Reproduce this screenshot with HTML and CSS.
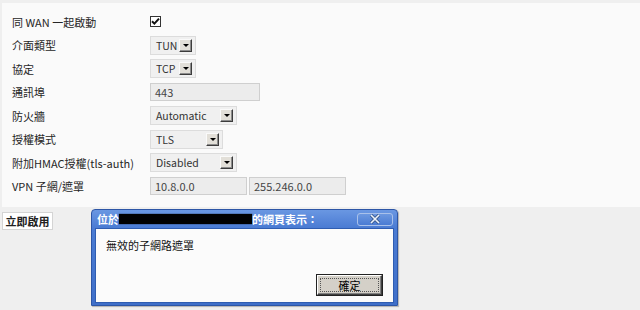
FILE: index.html
```html
<!DOCTYPE html>
<html lang="zh-Hant">
<head>
    <meta charset="UTF-8">
    <title>OpenVPN 伺服器</title>
    <link rel="stylesheet" href="styles.css">
</head>
<body>
    <div class="panel">
        <div class="form">
            <div class="row">
                <span class="label">同 WAN 一起啟動</span>
                <span class="check">
                    <svg width="9" height="9" viewBox="0 0 9 9"><path d="M1 4.2 L3.4 6.6 L8 1.6" fill="none" stroke="#111" stroke-width="2"/></svg>
                </span>
            </div>
            <div class="row">
                <span class="label">介面類型</span>
                <span class="select w46">TUN<span class="arrow"></span></span>
            </div>
            <div class="row">
                <span class="label">協定</span>
                <span class="select w46">TCP<span class="arrow"></span></span>
            </div>
            <div class="row">
                <span class="label">通訊埠</span>
                <span class="input w110">443</span>
            </div>
            <div class="row">
                <span class="label">防火牆</span>
                <span class="select w87">Automatic<span class="arrow"></span></span>
            </div>
            <div class="row">
                <span class="label">授權模式</span>
                <span class="select w73">TLS<span class="arrow"></span></span>
            </div>
            <div class="row">
                <span class="label">附加HMAC授權(tls-auth)</span>
                <span class="select w87">Disabled<span class="arrow"></span></span>
            </div>
            <div class="row">
                <span class="label">VPN 子網/遮罩</span>
                <span class="pair">
                    <span class="input w97">10.8.0.0</span>
                    <span class="input w97">255.246.0.0</span>
                </span>
            </div>
        </div>
    </div>

    <div class="actions">
        <button class="apply">立即啟用</button>
    </div>

    <!-- alert box over the page -->
    <div class="dialog">
        <div class="title">
            <span class="title-text">位於<span class="redact"></span>的網頁表示：</span>
            <span class="close">
                <svg width="14" height="10" viewBox="0 0 14 10">
                    <path d="M3 1 L11 9 M11 1 L3 9" stroke="#3a5a8c" stroke-width="3.2" fill="none"/>
                    <path d="M3 1 L11 9 M11 1 L3 9" stroke="#eef3fb" stroke-width="1.6" fill="none"/>
                </svg>
            </span>
        </div>
        <div class="body">
            <p class="msg">無效的子網路遮罩</p>
            <div class="buttons">
                <button class="ok"><span>確定</span></button>
            </div>
        </div>
    </div>
</body>
</html>
```

FILE: styles.css
```css
body { margin: 0; background: #efefef; font-family: "Noto Sans CJK TC", "Liberation Sans", sans-serif; font-size: 11px; color: #222; }
.panel { margin: 3px 0 0 2px; background: #fafafa; padding: 7px 0 0 10px; box-sizing: border-box; height: 204px; }
.form { display: grid; grid-template-columns: 138px auto; grid-auto-rows: 23.5px; }
.row { display: contents; }
.label { display: flex; align-items: center; color: #262626; }
.row > :last-child { display: flex; align-items: center; }
.check { width: 11px; height: 11px; }
.check svg { display: block; width: 9px; height: 9px; border: 1px solid #333; background: #fff; }
.row > .check { display: block; align-self: center; }
.select { box-sizing: border-box; height: 19px; border: 1px solid #dcdcdc; background: #f0f0f0; padding: 0 3px 0 5px; justify-content: space-between; color: #333; font-size: 10.5px; }
.input { box-sizing: border-box; height: 18px; border: 1px solid #cfcfcf; background: #ececec; padding: 0 4px; color: #444; }
.row > .input, .row > .select { display: flex; align-self: center; }
.pair { display: flex; gap: 2px; align-self: center; }
.pair .input { display: flex; align-items: center; }
.w46 { width: 46px; }
.w73 { width: 73px; }
.w87 { width: 87px; }
.w97 { width: 97px; }
.w110 { width: 110px; }
.arrow { position: relative; box-sizing: border-box; width: 13px; height: 13px; background: #e2dfd8; border: 1px solid; border-color: #fafafa #3c3c3c #3c3c3c #fafafa; box-shadow: inset -1px -1px #8c8c8c; }
.arrow::after { content: ""; position: absolute; left: 3px; top: 4px; border: 3px solid transparent; border-top: 3px solid #000; border-bottom: 0; }
.actions { padding: 5px 0 0 2px; }
.apply { box-sizing: border-box; width: 51px; height: 18px; padding: 0; background: #fff; border: 1px solid #d4d4d4; font: bold 11px "Noto Sans CJK TC", sans-serif; color: #222; }
.dialog { position: absolute; left: 91px; top: 209px; box-sizing: border-box; width: 307px; height: 97px; padding: 0 3px 3px; border: 1px solid #2d56a6; border-radius: 4px 4px 0 0; background: linear-gradient(#6a97e2, #4a7bd3 18px, #3f6fc9); box-shadow: 1px 1px 1px rgba(0,0,0,0.25); }
.title { height: 18px; display: flex; align-items: center; justify-content: space-between; }
.title-text { display: flex; align-items: center; padding-left: 2px; color: #fff; font: bold 11px "Noto Sans CJK TC", sans-serif; }
.redact { width: 133px; height: 10px; background: #000; box-shadow: 0 0 1px #000; }
.close { box-sizing: border-box; width: 36px; height: 13px; margin-right: 1px; display: flex; align-items: center; justify-content: center; border: 1px solid #a9c1ea; border-radius: 3px; background: linear-gradient(#6c98e0, #4a7bd3); }
.close svg { display: block; }
.body { box-sizing: border-box; height: 75px; background: #fbfbfb; border: 1px solid #2f5db1; position: relative; }
.msg { margin: 0; padding: 8px 0 0 10px; color: #111; }
.buttons { position: absolute; right: 11px; bottom: 7px; }
.ok { box-sizing: border-box; width: 65px; height: 20px; padding: 2px; background: #d4d0c8; border: 1px solid; border-color: #fff #404040 #404040 #fff; box-shadow: inset -1px -1px #808080, 0 0 0 1px #222; font: 11px "Noto Sans CJK TC", sans-serif; color: #000; }
.ok span { display: block; height: 100%; border: 1px dotted #555; box-sizing: border-box; line-height: 12px; }
```
